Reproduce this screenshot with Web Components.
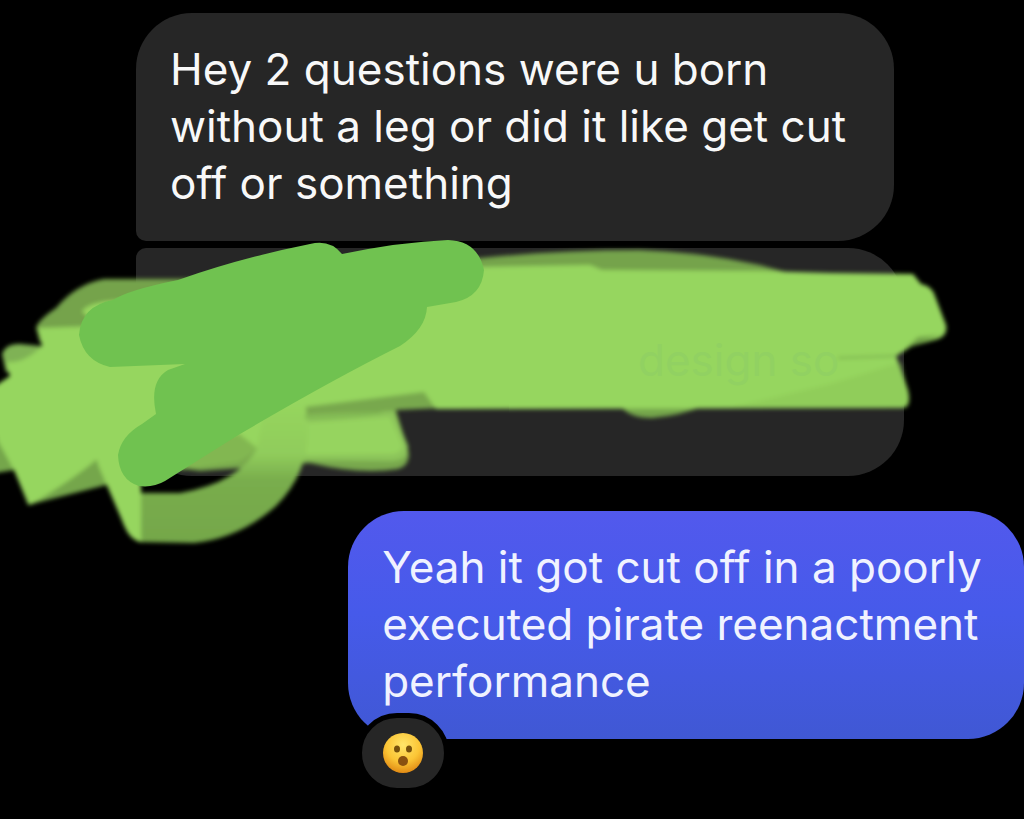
<!DOCTYPE html>
<html lang="en">
<head>
<meta charset="utf-8">
<meta name="viewport" content="width=device-width, initial-scale=1">
<title>Direct messages</title>
<style>
  body { margin: 0; background: #000; font-family: Inter, "Noto Sans", sans-serif; }
</style>
</head>
<body>
<chat-thread>
  <message-bubble class="first">Hey 2 questions were u born without a leg or did it like get cut off or something</message-bubble>
  <message-bubble class="second"><marker-scribble slot="cover"></marker-scribble></message-bubble>
  <message-bubble class="sent">Yeah it got cut off in a poorly executed pirate reenactment performance<reaction-badge slot="reaction"></reaction-badge></message-bubble>
</chat-thread>
<script>
const define = (name, html) => customElements.define(name, class extends HTMLElement {
  constructor() {
    super();
    this.attachShadow({ mode: "open" }).innerHTML = html;
  }
});

define("chat-thread", `
  <style>
    :host { display: flex; flex-direction: column; gap: 7px; padding: 13px 0 80px; overflow: hidden; background: #000; }
    ::slotted(.first) { width: 74%; margin-left: 136px; }
    ::slotted(.second) { width: 75%; margin-left: 136px; }
    ::slotted(.sent) { width: 66%; align-self: flex-end; margin-top: 28px; }
  </style>
  <slot></slot>`);

define("message-bubble", `
  <style>
    :host { display: block; position: relative; box-sizing: border-box; min-height: 228px; padding: 28px 34px;
      background: #262626; color: #f8f8f8; border-radius: 56px 56px 56px 10px; font-size: 44px; line-height: 57px; }
    :host(.second) { border-radius: 10px 56px 56px 56px; }
    :host(.sent) { border-radius: 56px; color: #f0f2ff; background: linear-gradient(#5259ed, #465aea 45%, #4058d4); }
    p { margin: 0; }
  </style>
  <p><slot></slot></p>
  <slot name="cover"></slot>
  <slot name="reaction"></slot>`);

define("marker-scribble", `
  <style>
    :host { position: absolute; left: -136px; top: -18px; }
    svg { display: block; width: 960px; height: 330px; }
    text { font-size: 44px; }
  </style>
  <svg viewBox="0 230 960 330">
    <defs>
      <filter id="soft" x="-5%" y="-5%" width="110%" height="110%"><feGaussianBlur stdDeviation="2"/></filter>
      <linearGradient id="ring" x1="0" y1="0" x2="0" y2="1">
        <stop offset="0" stop-color="#96d65e"/><stop offset=".38" stop-color="#90cc5b"/><stop offset=".56" stop-color="#79ad4d"/><stop offset="1" stop-color="#75a74a"/>
      </linearGradient>
    </defs>
    <g filter="url(#soft)">
      <path fill="#75a34c" d="M36 328 Q38 320 56 308 Q76 284 104 279 L250 279 L480 258 Q560 250 640 250 Q700 252 760 265 L800 276 L800 330 L120 340 L40 342Z"/>
      <path fill="#7fb254" d="M2 354 Q6 343 20 344 L50 347 L44 376 L6 372Z"/>
      <path fill="#75a64b" d="M-5 440 L60 400 L110 484 L28 505 L14 470 L-5 473Z"/>
      <path fill="#78a84d" d="M150 464 L200 471 L310 463 Q360 475 398 469 Q409 466 409 454 L396 410 L440 408 L426 390 L270 400 L170 440Z"/>
      <path fill="#75a64b" d="M620 405 Q628 418 652 418 Q680 416 706 405Z"/>
      <path fill="#96d65e" d="M38 328 L100 326 L82 312 Q86 302 120 300 L480 267 L590 265 L602 270 L760 271 L830 273 L913 274 L921 284 Q932 286 935 296 L946 325 Q948 335 938 339 L912 346 L896 356 L908 390 Q912 408 902 408 L450 409 L436 409 L424 392 L304 407 L306 450 L260 450 L230 434 L180 458 L140 480 L141 542 Q130 540 124 525 L96 460 Q72 480 30 505 L14 470 L-8 430 L-8 388 L10 376 L6 362 Q24 364 42 346Z"/>
      <path fill="#8cc55a" d="M303 415 L394 411 L408 446 Q409 460 392 461 L303 460Z"/>
      <path fill="#96d45e" d="M306 423 L390 417 L402 444 Q404 452 392 454 L306 455Z"/>
      <path fill="#82b751" d="M238 433 L257 448 Q248 458 238 462 L180 470 L202 450Z"/>
      <path fill="url(#ring)" d="M138 542 L194 543 Q240 538 276 506 Q308 474 308 430 L305 400 L264 412 L257 448 Q240 482 180 493 L140 493Z"/>
      <path fill="#96d65e" d="M100 455 L141 480 L141 542 Q130 540 124 525Z"/>
      <path fill="#84ba54" d="M830 384 L902 362 L908 392 Q910 408 902 408 L730 408Z" opacity=".3"/>
      <path fill="#6fa047" d="M918 337 L940 335 L905 349Z"/>
      <path fill="none" stroke="#75ad4c" stroke-width="2" d="M838 358 L895 356 M304 417 Q340 418 382 412" opacity=".8"/>
    </g>
    <text x="638" y="376" fill="#91d162">design so</text>
    <path fill="#70c250" d="M79 335 Q81 306 113 300 Q128 290 178 280 Q240 258 310 244 Q330 239 342 254 Q400 242 448 240 Q478 241 484 270 Q482 296 456 302 L427 307 Q426 329 400 346 Q330 381 240 434 L165 481 Q153 488 139 486 Q119 480 118 455 Q121 436 142 424 L156 414 Q149 381 168 370 L185 364 L110 367 Q84 361 79 335Z"/>
  </svg>`);

define("reaction-badge", `
  <style>
    :host { position: absolute; left: 9px; bottom: -54px; }
    span { display: flex; align-items: center; justify-content: center; box-sizing: border-box; width: 92px; height: 80px;
      border: 5px solid #000; border-radius: 40px; background: #262626; }
    svg { width: 40px; height: 40px; }
  </style>
  <span role="img" aria-label="Surprised face">
    <svg viewBox="0 0 40 40">
      <defs>
        <radialGradient id="face" cx=".5" cy=".3" r=".7">
          <stop offset="0" stop-color="#ffe56a"/><stop offset=".6" stop-color="#fbc535"/><stop offset="1" stop-color="#e18b15"/>
        </radialGradient>
      </defs>
      <circle cx="20" cy="20" r="20" fill="url(#face)"/>
      <ellipse cx="14" cy="16" rx="3" ry="3.5" fill="#76500c"/>
      <ellipse cx="26" cy="16" rx="3" ry="3.5" fill="#76500c"/>
      <circle cx="20" cy="28" r="5" fill="#895010"/>
    </svg>
  </span>`);
</script>
</body>
</html>
